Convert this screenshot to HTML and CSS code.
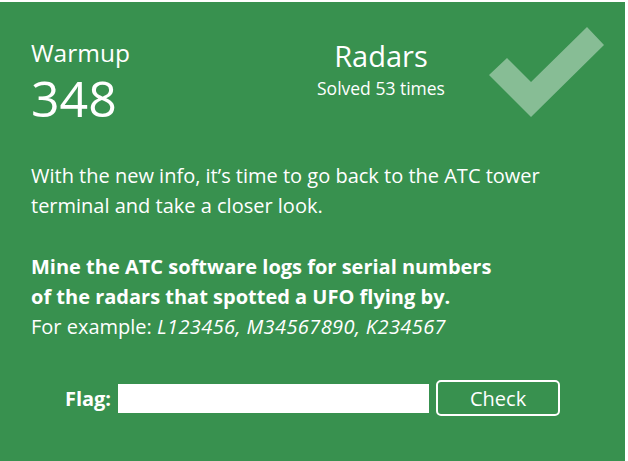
FILE: index.html
```html
<!DOCTYPE html>
<html>
<head>
<meta charset="utf-8">
<link rel="stylesheet" href="styles.css">
</head>
<body>
<div class="card">
  <svg class="check" width="628" height="461" viewBox="0 0 628 461" aria-hidden="true">
    <polygon points="489,75 507,58 531,82 587,27 604,45 531,117" fill="rgba(255,255,255,0.4)"/>
  </svg>
  <div class="header">
    <div class="cat">
      <div class="cat-name">Warmup</div>
      <div class="points">348</div>
    </div>
    <div class="title">
      <div class="name">Radars</div>
      <div class="solved">Solved 53 times</div>
    </div>
  </div>
  <p class="desc">With the new info, it’s time to go back to the ATC tower<br>terminal and take a closer look.</p>
  <p class="desc task"><strong>Mine the ATC software logs for serial numbers<br>of the radars that spotted a UFO flying by.</strong><br>For example: <em>L123456, M34567890, K234567</em></p>
  <form class="flag-row">
    <label class="flag-label" for="flag">Flag:</label>
    <input class="flag-input" id="flag" type="text">
    <button class="check-btn" type="button">Check</button>
  </form>
</div>
</body>
</html>
```
FILE: styles.css
```css
html, body {
  margin: 0;
  padding: 0;
  background: #ffffff;
}
body {
  padding-top: 2px;
  font-family: "Open Sans", "Noto Sans", sans-serif;
  color: #ffffff;
}
.card {
  position: relative;
  width: 625px;
  height: 459px;
  background: #38914f;
  padding: 37px 0 0 31px;
  box-sizing: border-box;
  overflow: hidden;
}
.check {
  position: absolute;
  left: 0;
  top: -2px;
  pointer-events: none;
}
.header {
  display: grid;
  grid-template-columns: 200px 300px;
  position: relative;
}
.cat-name {
  font-size: 24.5px;
  line-height: 28px;
}
.points {
  font-size: 50px;
  line-height: 62px;
}
.title {
  text-align: center;
}
.name {
  font-size: 29px;
  line-height: 33px;
}
.solved {
  font-size: 17.5px;
  line-height: 24px;
  margin-top: 4px;
}
.desc {
  position: relative;
  margin: 32px 0 0 0;
  font-size: 20px;
  line-height: 30px;
}
.task {
  margin-top: 31px;
}
.task strong {
  font-weight: 700;
}
.task em {
  letter-spacing: 0.4px;
}
.flag-row {
  position: relative;
  margin: 38px 0 0 -31px;
  display: flex;
  justify-content: center;
  align-items: center;
  gap: 7px;
}
.flag-label {
  font-size: 20px;
  font-weight: 700;
}
.flag-input {
  width: 311px;
  height: 29px;
  border: none;
  padding: 0 6px;
  box-sizing: border-box;
  background: #ffffff;
  font-family: inherit;
  font-size: 16px;
  outline: none;
}
.check-btn {
  width: 124px;
  height: 36px;
  border: 2px solid #ffffff;
  border-radius: 5px;
  background: transparent;
  color: #ffffff;
  font-family: inherit;
  font-size: 20px;
  padding: 0;
  box-sizing: border-box;
}
```
